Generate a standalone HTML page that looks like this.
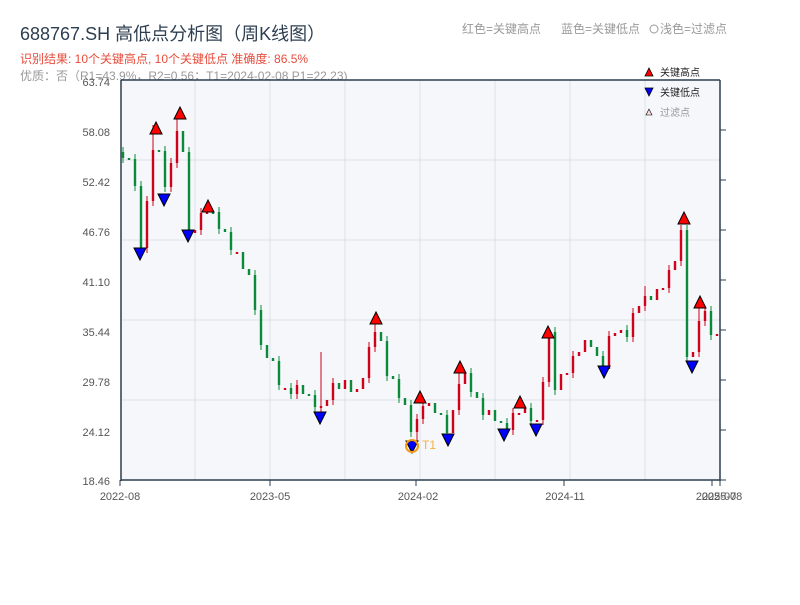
<!DOCTYPE html>
<html><head><meta charset="utf-8"><style>
body{margin:0;width:800px;height:600px;background:#fff;overflow:hidden;font-family:"Liberation Sans","Noto Sans CJK SC",sans-serif}
</style></head><body>
<svg width="800" height="600" xmlns="http://www.w3.org/2000/svg" font-family="Liberation Sans, Noto Sans CJK SC, sans-serif">
<defs><clipPath id="cp"><rect x="121" y="80" width="599" height="400"/></clipPath></defs>
<text x="20" y="40" font-size="18" fill="#2c3e50">688767.SH 高低点分析图（周K线图）</text>
<text x="20" y="63" font-size="12" fill="#e74c3c">识别结果: 10个关键高点, 10个关键低点   准确度: 86.5%</text>
<text x="20" y="80" font-size="12" fill="#999">优质：否（R1=43.9%，R2=0.56；T1=2024-02-08 P1=22.23)</text>
<text x="462" y="33" font-size="12" fill="#999">红色=关键高点</text>
<text x="561" y="33" font-size="12" fill="#999">蓝色=关键低点</text>
<circle cx="654" cy="29" r="4" fill="none" stroke="#999"/>
<text x="660" y="33" font-size="12" fill="#999">浅色=过滤点</text>
<rect x="121" y="80" width="599" height="400" fill="#f5f7fa"/>
<g stroke="#dde1e6" stroke-width="1">
<line x1="195" y1="80" x2="195" y2="480"/><line x1="270" y1="80" x2="270" y2="480"/><line x1="345" y1="80" x2="345" y2="480"/><line x1="420" y1="80" x2="420" y2="480"/><line x1="495" y1="80" x2="495" y2="480"/><line x1="570" y1="80" x2="570" y2="480"/><line x1="645" y1="80" x2="645" y2="480"/>
<line x1="121" y1="160" x2="720" y2="160"/><line x1="121" y1="240" x2="720" y2="240"/><line x1="121" y1="320" x2="720" y2="320"/><line x1="121" y1="400" x2="720" y2="400"/>
</g>
<g clip-path="url(#cp)" fill="none">
<path stroke="#0a8a3a" stroke-width="2.4" d="M123 152V158M129 158V160M135 159V186M141 186V248M159 150V152M165 151V187M183 131V152M189 152V233M213 212V214M219 212V229M225 229V232M231 232V250M243 252V269M249 269V275M255 275V310M261 310V345M267 345V358M273 358V361M279 361V385M291 388V394M303 385V394M309 394V396M315 395V407M339 383V389M351 380V392M381 332V341M387 341V376M393 376V379M399 379V398M405 398V405M411 405V432M435 403V413M441 413V415M447 415V433M471 373V392M477 392V398M483 398V415M495 410V421M501 421V423M507 423V430M531 408V421M555 332V390M591 340V347M597 347V356M603 356V369M627 330V337M651 296V300M687 230V357M711 311V335"/>
<path stroke="#0a8a3a" stroke-width="1" d="M123 147V163M135 154V191M141 181V253M165 146V192M189 147V238M219 207V234M231 227V255M255 270V315M261 305V350M279 356V390M291 383V399M315 390V412M387 336V381M399 374V403M411 400V437M447 410V438M471 368V397M483 393V420M507 418V435M531 403V426M555 327V395M603 351V374M627 325V342M687 225V362M711 306V340"/>
<path stroke="#d0021b" stroke-width="2.4" d="M147 201V248M153 150V201M171 163V187M177 131V163M195 230V233M201 213V230M207 212V214M237 252V254M285 388V390M297 385V394M321 406V408M327 400V406M333 383V400M345 380V389M357 389V392M363 378V389M369 347V378M375 332V347M417 419V432M423 406V419M429 403V406M453 410V433M459 384V410M465 373V384M489 410V415M513 413V430M519 413V415M525 408V413M537 420V422M543 382V420M549 332V382M561 374V390M567 373V375M573 356V373M579 352V356M585 340V352M609 336V369M615 333V336M621 330V333M633 313V337M639 306V313M645 296V306M657 289V300M663 288V290M669 270V288M675 261V270M681 230V261M693 352V357M699 321V352M705 311V321M717 334V336"/>
<path stroke="#d0021b" stroke-width="1" d="M147 196V253M153 125V206M171 158V192M177 113V168M201 208V235M297 380V399M321 352V412M333 378V405M369 342V383M375 318V352M417 414V445M423 401V424M459 364V415M513 408V435M543 377V425M549 330V387M573 351V378M609 331V366M633 308V342M645 286V311M669 265V293M681 225V266M699 300V357M705 306V326"/>
</g>
<g stroke="#2c3e50" stroke-width="1.5" fill="none">
<line x1="121" y1="80" x2="720" y2="80"/><line x1="121" y1="80" x2="121" y2="481"/><line x1="121" y1="480" x2="720" y2="480"/><line x1="720" y1="80" x2="720" y2="481"/>
</g>
<g stroke="#2c3e50" stroke-width="1">
<line x1="720" y1="130" x2="726" y2="130"/><line x1="720" y1="180" x2="726" y2="180"/><line x1="720" y1="230" x2="726" y2="230"/><line x1="720" y1="280" x2="726" y2="280"/><line x1="720" y1="330" x2="726" y2="330"/><line x1="720" y1="380" x2="726" y2="380"/><line x1="720" y1="430" x2="726" y2="430"/><line x1="720" y1="480" x2="726" y2="480"/>
<line x1="120" y1="480" x2="120" y2="486"/><line x1="270" y1="480" x2="270" y2="486"/><line x1="416" y1="480" x2="416" y2="486"/><line x1="564" y1="480" x2="564" y2="486"/><line x1="712" y1="480" x2="712" y2="486"/><line x1="720" y1="480" x2="720" y2="486"/>
</g>
<g font-size="11" fill="#555" text-anchor="end">
<text x="110" y="86">63.74</text><text x="110" y="136">58.08</text><text x="110" y="186">52.42</text><text x="110" y="236">46.76</text><text x="110" y="286">41.10</text><text x="110" y="336">35.44</text><text x="110" y="386">29.78</text><text x="110" y="436">24.12</text><text x="110" y="485">18.46</text>
</g>
<g font-size="11" fill="#555" text-anchor="middle">
<text x="120" y="500">2022-08</text><text x="270" y="500">2023-05</text><text x="418" y="500">2024-02</text><text x="565" y="500">2024-11</text><text x="716" y="500">2025-07</text><text x="722" y="500">2025-08</text>
</g>
<g stroke="#000" stroke-width="1">
<g fill="#f00">
<polygon points="150,134 162,134 156,122"/><polygon points="174,119 186,119 180,107"/><polygon points="202,212 214,212 208,200"/><polygon points="370,324 382,324 376,312"/><polygon points="414,403 426,403 420,391"/><polygon points="454,373 466,373 460,361"/><polygon points="514,408 526,408 520,396"/><polygon points="542,338 554,338 548,326"/><polygon points="678,224 690,224 684,212"/><polygon points="694,308 706,308 700,296"/>
</g>
<g fill="#00f">
<polygon points="134,248 146,248 140,260"/><polygon points="158,194 170,194 164,206"/><polygon points="182,230 194,230 188,242"/><polygon points="314,412 326,412 320,424"/><polygon points="442,434 454,434 448,446"/><polygon points="498,429 510,429 504,441"/><polygon points="530,424 542,424 536,436"/><polygon points="598,366 610,366 604,378"/><polygon points="686,361 698,361 692,373"/><polygon points="406,441 418,441 412,453"/>
</g>
</g>
<circle cx="412" cy="446" r="6" fill="none" stroke="#f39c12" stroke-width="2"/>
<text x="422" y="449" font-size="12" fill="#f5b041">T1</text>
<polygon points="645,76 653,76 649,68" fill="#f00" stroke="#000" stroke-width=".8"/>
<text x="660" y="76" font-size="10" fill="#222">关键高点</text>
<polygon points="645,88 653,88 649,96" fill="#00f" stroke="#000" stroke-width=".8"/>
<text x="660" y="96" font-size="10" fill="#222">关键低点</text>
<polygon points="646,115 652,115 649,109" fill="#fdd" stroke="#000" stroke-width=".6"/>
<text x="660" y="116" font-size="10" fill="#999">过滤点</text>
</svg>
</body></html>
